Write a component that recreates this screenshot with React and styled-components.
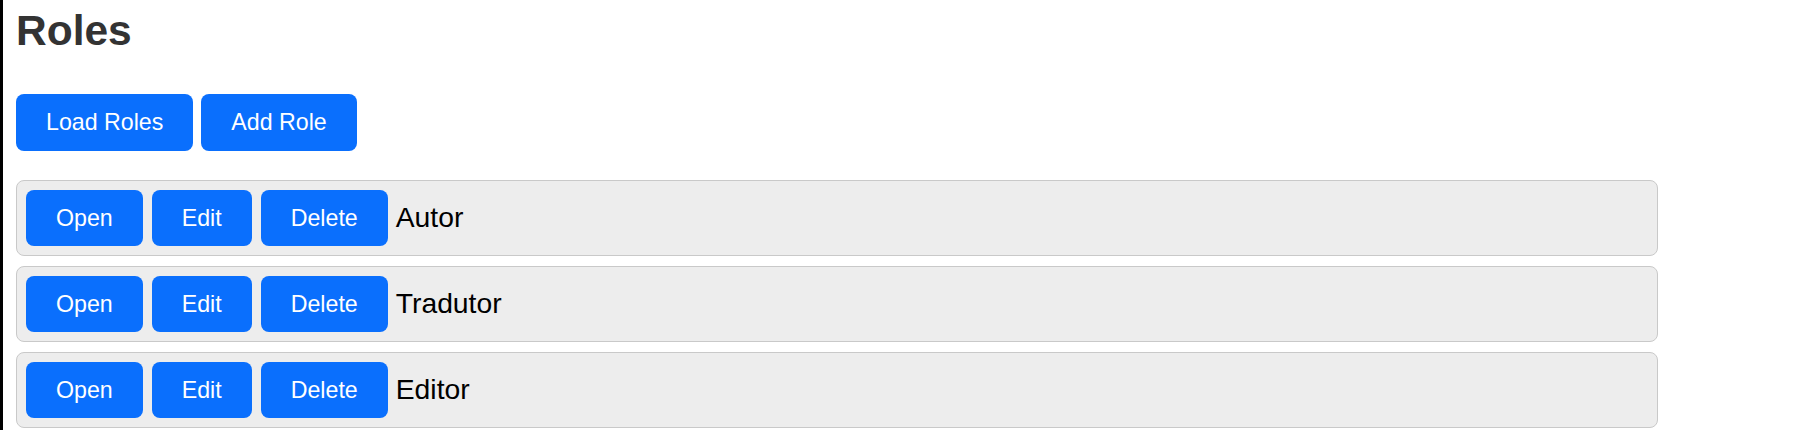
import React from "react";
import styled, { createGlobalStyle } from "styled-components";

const GlobalStyle = createGlobalStyle`
  html, body {
    margin: 0;
    padding: 0;
    background: #ffffff;
  }
  body {
    font-family: "Liberation Sans", Arial, Helvetica, sans-serif;
  }
`;

const Page = styled.div`
  box-sizing: border-box;
  min-height: 430px;
  border-left: 3px solid #000000;
  padding: 7px 0 0 13px;
`;

const Title = styled.h1`
  margin: 0;
  font-size: 42.5px;
  line-height: 48px;
  font-weight: 700;
  color: #333333;
`;

const Toolbar = styled.div`
  display: flex;
  gap: 8px;
  margin-top: 39px;
`;

const Button = styled.button`
  box-sizing: border-box;
  height: 56.5px;
  padding: 0 30px;
  border: none;
  border-radius: 8px;
  background: #0a6ffd;
  color: #ffffff;
  font-family: "Liberation Sans", Arial, Helvetica, sans-serif;
  font-size: 23.2px;
  line-height: 26px;
  cursor: pointer;
  flex: none;
`;

const List = styled.div`
  display: flex;
  flex-direction: column;
  gap: 9.5px;
  margin-top: 29px;
  width: 1642px;
`;

const Row = styled.div`
  box-sizing: border-box;
  display: flex;
  align-items: center;
  gap: 9px;
  padding: 9px;
  background: #ededed;
  border: 1px solid #c9c9c9;
  border-radius: 8px;
`;

const Label = styled.span`
  font-size: 28.3px;
  color: #000000;
  margin-left: -1px;
`;

const roles = ["Autor", "Tradutor", "Editor"];

export default function App() {
  return (
    <>
      <GlobalStyle />
      <Page>
        <Title>Roles</Title>
        <Toolbar>
          <Button>Load Roles</Button>
          <Button>Add Role</Button>
        </Toolbar>
        <List>
          {roles.map((r) => (
            <Row key={r}>
              <Button>Open</Button>
              <Button>Edit</Button>
              <Button>Delete</Button>
              <Label>{r}</Label>
            </Row>
          ))}
        </List>
      </Page>
    </>
  );
}
